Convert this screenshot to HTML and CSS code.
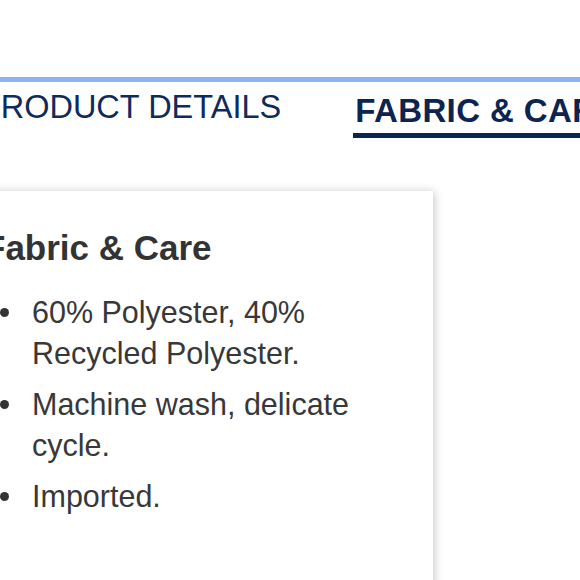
FILE: index.html
```html
<!DOCTYPE html>
<html lang="en">
<head>
<meta charset="utf-8">
<title>Fabric &amp; Care</title>
<link rel="stylesheet" href="styles.css">
</head>
<body>
<div class="page">
  <nav class="tabs">
    <div class="tab">PRODUCT DETAILS</div>
    <div class="tab tab-active">FABRIC &amp; CARE</div>
  </nav>
  <section class="card">
    <h2 class="card-title">Fabric &amp; Care</h2>
    <ul class="care-list">
      <li>60% Polyester, 40% Recycled Polyester.</li>
      <li>Machine wash, delicate cycle.</li>
      <li>Imported.</li>
    </ul>
  </section>
</div>
</body>
</html>
```

FILE: styles.css
```css
html, body {
  margin: 0;
  padding: 0;
  overflow: hidden;
  background: #ffffff;
}

body {
  font-family: "Liberation Sans", Arial, Helvetica, sans-serif;
  height: 580px;
}

.page {
  margin-left: -40px;
  padding-top: 77px;
}

.tabs {
  display: flex;
  align-items: flex-start;
  gap: 72px;
  border-top: 5px solid #8fb2f2;
  padding-left: 19px;
  white-space: nowrap;
}

.tab {
  font-size: 32.5px;
  line-height: 37px;
  color: #0f2b5c;
  padding-top: 7px;
}

.tab-active {
  font-size: 33px;
  letter-spacing: 0.4px;
  font-weight: bold;
  color: #0b2550;
  padding-top: 10px;
  padding-left: 2px;
  padding-bottom: 4px;
  border-bottom: 5px solid #0b2550;
}

.card {
  margin-top: 53px;
  width: 473px;
  min-height: 500px;
  box-sizing: border-box;
  padding: 37px 60px 40px 24px;
  background: #ffffff;
  box-shadow: 1px 1px 9px rgba(0, 0, 0, 0.24);
}

.card-title {
  margin: 0 0 24px 0;
  font-size: 35px;
  line-height: 40px;
  font-weight: bold;
  color: #333333;
}

.care-list {
  list-style: none;
  margin: 0;
  padding: 0;
}

.care-list li {
  position: relative;
  padding-left: 48px;
  margin-bottom: 10px;
  font-size: 30.5px;
  line-height: 41px;
  color: #383838;
}

.care-list li::before {
  content: "";
  position: absolute;
  left: 16px;
  top: 16px;
  width: 9px;
  height: 9px;
  border-radius: 50%;
  background: #333333;
}
```
